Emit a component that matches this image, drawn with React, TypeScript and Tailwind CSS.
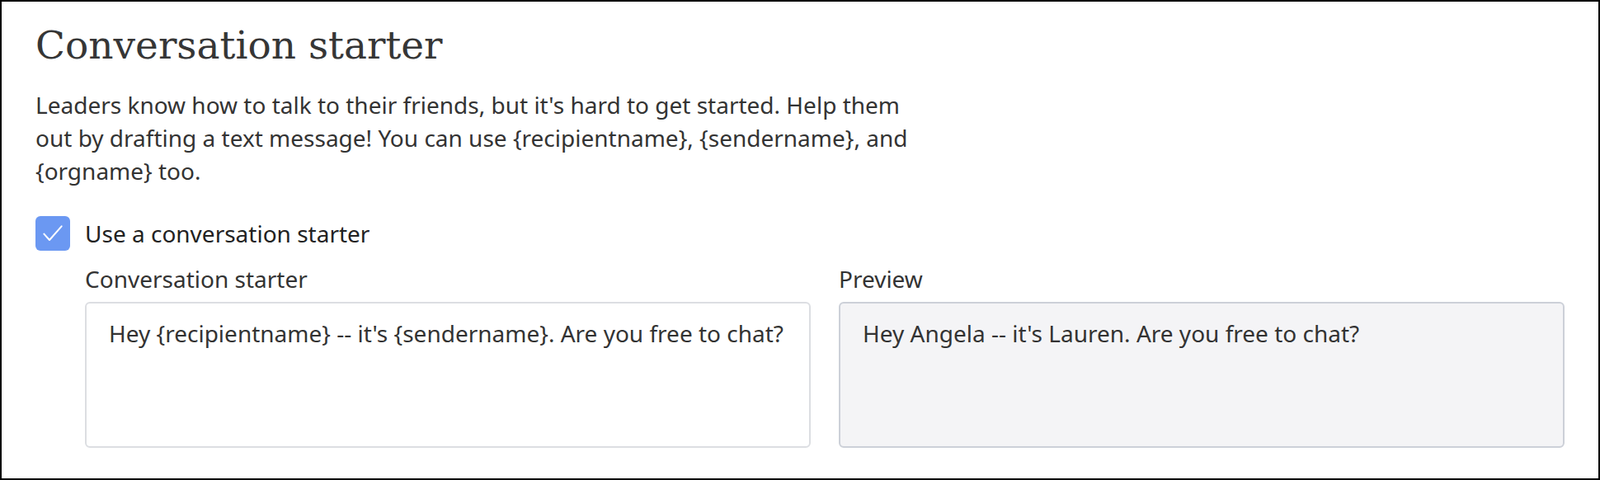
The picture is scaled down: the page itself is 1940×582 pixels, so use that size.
import React, { useState } from 'react';

const sans = { fontFamily: '"Noto Sans", "Open Sans", sans-serif' };

const fill = (msg: string) =>
  msg.replace('{recipientname}', 'Angela').replace('{sendername}', 'Lauren').replace('{orgname}', 'Our Org');

const App: React.FC = () => {
  const [enabled, setEnabled] = useState(true);
  const [message, setMessage] = useState("Hey {recipientname} -- it's {sendername}. Are you free to chat?");

  return (
    <div className="w-[1940px] h-[582px] border-2 border-black bg-white text-[#333333] px-[41px] pt-[25px] font-['Noto_Sans',sans-serif]">
      <h2 className="text-[47px] leading-[56px] text-[#363636] font-['DejaVu_Serif',serif]">Conversation starter</h2>
      <p className="mt-[24px] max-w-[1080px] text-[28px] leading-[40px] text-[#333333]">
        Leaders know how to talk to their friends, but it's hard to get started. Help them out by drafting a text message! You can use {'{recipientname}'}, {'{sendername}'}, and {'{orgname}'} too.
      </p>

      <label className="mt-[35px] flex items-center gap-[18px] cursor-pointer select-none">
        <button
          type="button"
          onClick={() => setEnabled(!enabled)}
          className={`w-[42px] h-[42px] rounded-[6px] flex items-center justify-center ${enabled ? 'bg-[#6b98f2]' : 'border border-gray-300 bg-white'}`}
        >
          {enabled && (
            <svg width="32" height="32" viewBox="0 0 24 24" fill="none" stroke="white" strokeWidth="1.5" strokeLinecap="round" strokeLinejoin="round">
              <path d="M4 12.5l5 5.5L20 5.5" />
            </svg>
          )}
        </button>
        <span className="text-[28px] leading-[40px] text-[#222222]">Use a conversation starter</span>
      </label>

      {enabled && (
        <div className="ml-[60px] mt-[16px] grid grid-cols-2 gap-[34px]">
          <div>
            <div className="text-[28px] leading-[36px] text-[#333333]">Conversation starter</div>
            <textarea
              value={message}
              onChange={(e) => setMessage(e.target.value)}
              style={sans}
              className="mt-[10px] block w-full h-[177px] resize-none rounded-[6px] border-2 border-[#dcdee2] bg-white px-[27px] py-[18px] text-[28px] leading-[36px] text-[#333333] outline-none"
            />
          </div>
          <div>
            <div className="text-[28px] leading-[36px] text-[#333333]">Preview</div>
            <div className="mt-[10px] h-[177px] rounded-[6px] border-2 border-[#ccd0d8] bg-[#f4f4f6] px-[27px] py-[18px] text-[28px] leading-[36px] text-[#333333]">
              {fill(message)}
            </div>
          </div>
        </div>
      )}
    </div>
  );
};

export default App;
